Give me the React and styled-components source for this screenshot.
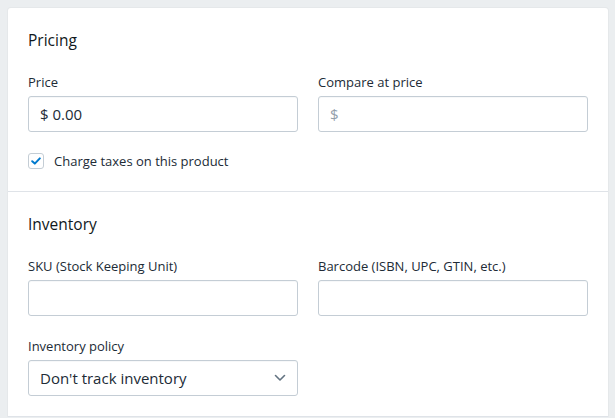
import React from "react";
import styled, { createGlobalStyle } from "styled-components";

const Global = createGlobalStyle`
  html, body { margin: 0; padding: 0; background: #ebeef0; }
  body {
    font-family: "Open Sans", "Noto Sans", sans-serif;
    color: #212b36;
    -webkit-font-smoothing: antialiased;
  }
  * { box-sizing: border-box; }
`;

const Page = styled.div`
  padding: 8px 0 0 8px;
`;

const Card = styled.div`
  width: 600px;
  background: #ffffff;
  border-radius: 3px 3px 0 0;
  box-shadow: 0 0 0 1px rgba(63, 63, 68, 0.03);
`;

const Section = styled.section`
  padding: 20px;
  border-bottom: 1px solid #dfe3e8;
  display: flex;
  flex-direction: column;
  gap: 20px;
`;

const Title = styled.h2`
  margin: 0;
  font-size: 15.5px;
  line-height: 24px;
  font-weight: 500;
  color: #111820;
`;

const Row = styled.div`
  display: grid;
  grid-template-columns: 270px 270px;
  column-gap: 20px;
`;

const Field = styled.div`
  display: flex;
  flex-direction: column;
  gap: 4px;
`;

const Label = styled.label`
  font-size: 13px;
  line-height: 20px;
  color: #212b36;
`;

const InputBox = styled.div`
  height: 36px;
  border: 1px solid #c4cdd5;
  border-radius: 3px;
  background: #fff;
  display: flex;
  align-items: center;
  padding: 0 11px;
  font-size: 15px;
  color: ${(p) => (p.$placeholder ? "#919eab" : "#212b36")};
  box-shadow: inset 0 1px 0 0 rgba(99, 115, 129, 0.05);
`;

const SelectBox = styled(InputBox)`
  justify-content: space-between;
  padding-right: 11px;
`;

const CheckRow = styled.label`
  display: flex;
  align-items: center;
  gap: 10px;
  font-size: 13px;
  line-height: 20px;
  color: #212b36;
  margin-top: -1px;
`;

const CheckBox = styled.span`
  width: 16px;
  height: 16px;
  border: 1px solid #c4cdd5;
  border-radius: 3px;
  background: #fff;
  display: flex;
  align-items: center;
  justify-content: center;
`;

const Check = () => (
  <svg width="10" height="8" viewBox="0 0 10 8">
    <path d="M1.2 4.2 L3.8 6.6 L8.8 1.4" fill="none" stroke="#007ace" strokeWidth="2" strokeLinecap="round" strokeLinejoin="round" />
  </svg>
);

const Chevron = () => (
  <svg width="12" height="8" viewBox="0 0 12 8">
    <path d="M1.5 1.5 L6 6 L10.5 1.5" fill="none" stroke="#637381" strokeWidth="1.6" strokeLinecap="round" strokeLinejoin="round" />
  </svg>
);

export default function App() {
  return (
    <>
      <Global />
      <Page>
        <Card>
          <Section>
            <Title>Pricing</Title>
            <Row>
              <Field>
                <Label>Price</Label>
                <InputBox>$ 0.00</InputBox>
              </Field>
              <Field>
                <Label>Compare at price</Label>
                <InputBox $placeholder>$</InputBox>
              </Field>
            </Row>
            <CheckRow>
              <CheckBox><Check /></CheckBox>
              Charge taxes on this product
            </CheckRow>
          </Section>
          <Section>
            <Title>Inventory</Title>
            <Row>
              <Field>
                <Label>SKU (Stock Keeping Unit)</Label>
                <InputBox />
              </Field>
              <Field>
                <Label>Barcode (ISBN, UPC, GTIN, etc.)</Label>
                <InputBox />
              </Field>
            </Row>
            <Row>
              <Field>
                <Label>Inventory policy</Label>
                <SelectBox>
                  <span>Don't track inventory</span>
                  <Chevron />
                </SelectBox>
              </Field>
            </Row>
          </Section>
        </Card>
      </Page>
    </>
  );
}
